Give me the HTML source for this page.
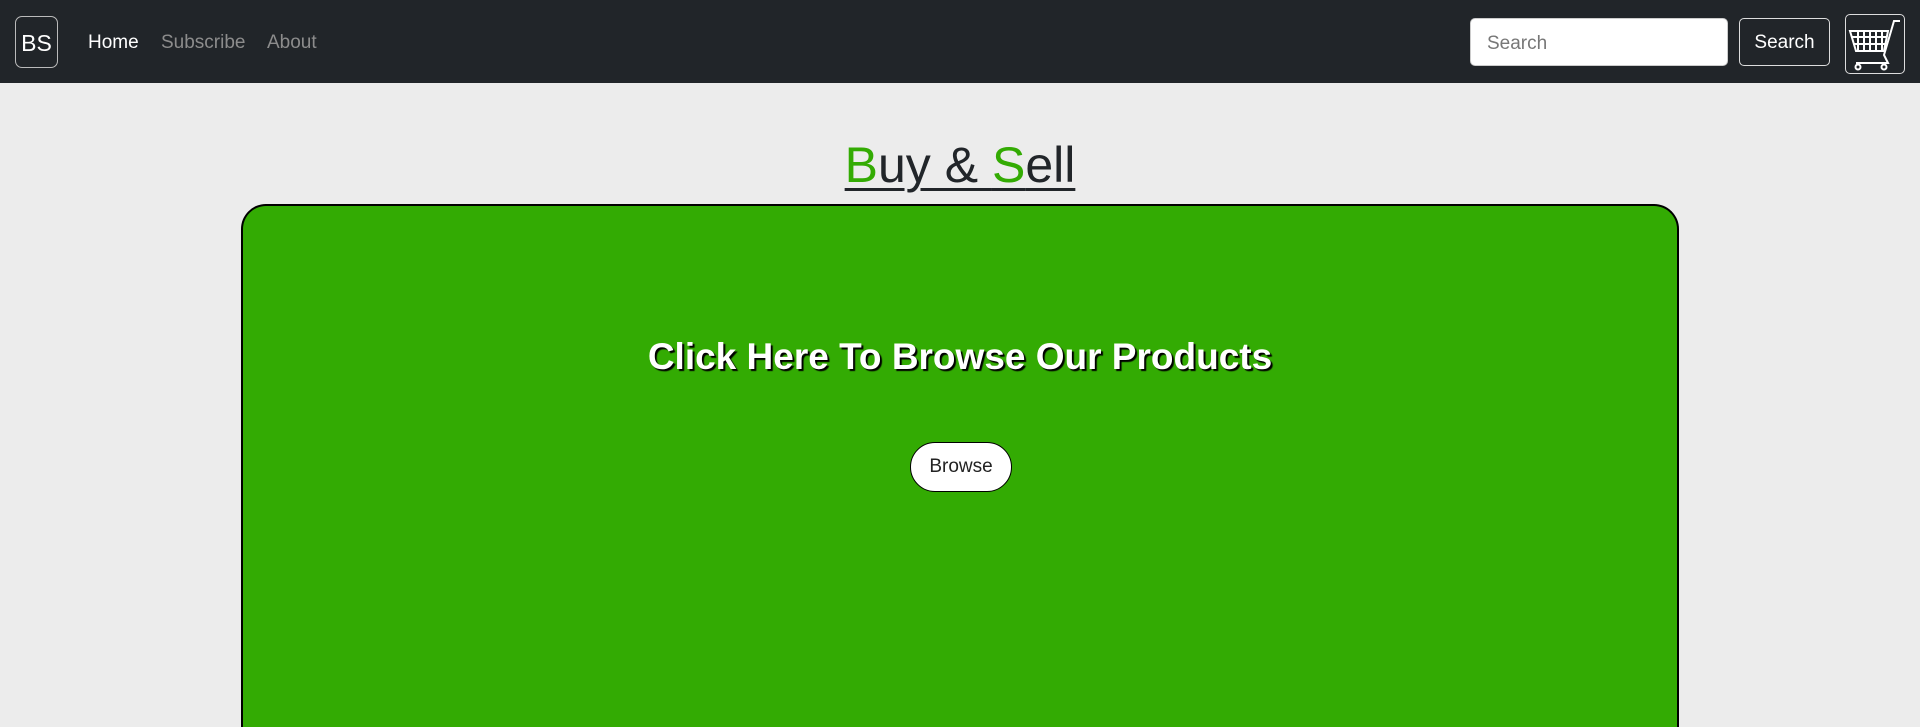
<!DOCTYPE html>
<html style="overflow:hidden;height:727px"><head><meta charset="utf-8"><style>
*{box-sizing:border-box;margin:0;padding:0}
body{width:1920px;height:727px;overflow:hidden;background:#ececec;font-family:"Liberation Sans","DejaVu Sans",sans-serif;position:relative}
nav{position:absolute;left:0;top:0;width:1920px;height:83px;background:#212529}
.brand{position:absolute;left:15px;top:16px;width:43px;height:52px;border:1px solid #bbb;border-radius:7px;color:#fff;font-size:23px;line-height:52px;text-align:center}
.link{position:absolute;top:32px;font-size:19px;color:#8c8c8c}
.inp{position:absolute;left:1470px;top:18px;width:258px;height:48px;background:#fff;border:1px solid #ccc;border-radius:5px;color:#777;font-size:19px;padding:14px 16px}
.btn{position:absolute;left:1739px;top:18px;width:91px;height:48px;border:1px solid #ddd;border-radius:5px;color:#fff;font-size:19px;text-align:center;line-height:48px}
.cart{position:absolute;left:1845px;top:14px;width:60px;height:60px;border:1px solid #ddd;border-radius:5px}
h1{position:absolute;left:0;width:1920px;top:136px;text-align:center;font-weight:normal;font-size:50px;color:#212529}
h1 span.u{text-decoration:underline;text-decoration-thickness:3px;text-underline-offset:6px}
.g{color:#33ab03}
.box{position:absolute;left:241px;top:204px;width:1438px;height:523px;background:#33ab03;border:2px solid #000;border-bottom:none;border-radius:25px 25px 0 0}
h2{position:absolute;left:0;width:100%;top:130px;text-align:center;color:#fff;font-size:37px;font-weight:bold;text-shadow:2px 2px 1px #000}
.bb{position:absolute;left:667px;top:236px;width:102px;height:50px;background:#fff;border:1px solid #000;border-radius:25px;font-size:19px;text-align:center;line-height:48px;color:#222}
</style></head><body>
<nav>
<div class="brand">BS</div>
<div class="link" style="left:88px;color:#fff">Home</div>
<div class="link" style="left:161px">Subscribe</div>
<div class="link" style="left:267px">About</div>
<div class="inp">Search</div>
<div class="btn">Search</div>
<div class="cart"><svg width="60" height="60" viewBox="0 0 60 60" fill="none" stroke="#fff" stroke-width="2">
<path d="M4 16 H42 L38 36 H10 Z"/>
<path d="M12 16 V36 M18 16 V36 M24 16 V36 M30 16 V36 M36 16 V36 M6 22 H41 M7 29 H40"/>
<path d="M54 6 H48 L38 40 L42 48 H10"/>
<circle cx="12" cy="52" r="2.5"/><circle cx="38" cy="52" r="2.5"/>
</svg></div>
</nav>
<h1><span class="u"><span class="g">B</span>uy &amp; <span class="g">S</span>ell</span></h1>
<div class="box">
<h2>Click Here To Browse Our Products</h2>
<div class="bb">Browse</div>
</div>
</body></html>
